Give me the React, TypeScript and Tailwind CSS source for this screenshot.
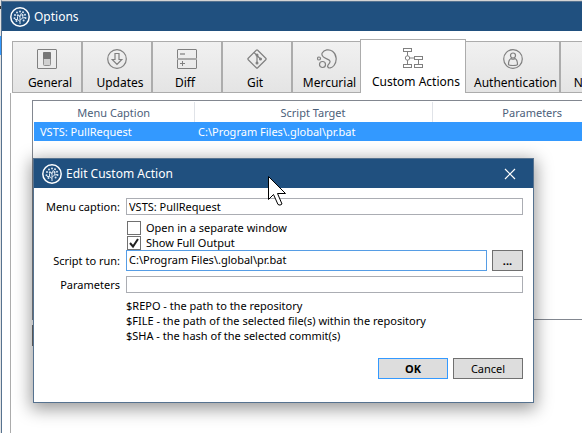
import type { ReactNode } from "react";

const stroke = { fill: "none", stroke: "#808080", strokeWidth: 1.2 };

function AppLogo() {
  return (
    <svg viewBox="0 0 20 20" className="size-5 shrink-0" fill="none" stroke="#fff" aria-hidden="true">
      <circle cx="10" cy="10" r="9.2" strokeWidth="1.5" />
      <path
        d="M10 17V8M10 14.5L7.5 12.5V9.5M7.5 12.5H5M10 13L12.8 11V8M12.8 11L15 10.5M10 10L8 7.5M10 9L11.5 6"
        stroke="#dbe6f1"
        strokeWidth="1"
      />
      <g fill="#dbe6f1" stroke="none">
        <circle cx="10" cy="4.5" r="1" />
        <circle cx="7" cy="5.5" r="1" />
        <circle cx="13" cy="5.3" r="1" />
        <circle cx="5" cy="8" r="1" />
        <circle cx="15" cy="7.8" r="1" />
        <circle cx="4.5" cy="11.3" r="1" />
        <circle cx="15.5" cy="11" r="1" />
        <circle cx="6.5" cy="14" r="1" />
        <circle cx="13.6" cy="13.5" r="1" />
        <circle cx="7.8" cy="8.6" r="1" />
        <circle cx="12.4" cy="8" r="1" />
      </g>
    </svg>
  );
}

const icons: Record<string, ReactNode> = {
  General: (
    <g>
      <rect x="0.5" y="0.5" width="19" height="19" rx="0.5" {...stroke} strokeWidth={1} />
      <rect x="6.5" y="3.5" width="7" height="13" rx="1" fill="#d0d0d0" stroke="#909090" />
      <rect x="6" y="3" width="8" height="7" rx="1" fill="#777" />
    </g>
  ),
  Updates: (
    <g {...stroke}>
      <circle cx="10" cy="10" r="9.3" />
      <path d="M8 4.5h4v6h2.800L10 15.5 5.200 10.500H8z" />
    </g>
  ),
  Diff: (
    <g {...stroke} strokeWidth={1}>
      <rect x="0.5" y="0.5" width="19" height="19" rx="0.5" />
      <path d="M0 10h20" stroke="#aaa" strokeWidth={2} />
      <path d="M3 5h5" stroke="#aaa" strokeWidth={2} />
      <path d="M3 14.5h5M5.5 12v5" />
    </g>
  ),
  Git: (
    <g {...stroke}>
      <rect x="3.3" y="3.3" width="13.4" height="13.4" rx="1" transform="rotate(45 10 10)" />
      <path d="M7 3.5L10 6.5V14M10 6.5L13.5 10" />
      <g fill="#808080">
        <circle cx="10" cy="6" r="0.9" />
        <circle cx="10" cy="14" r="0.9" />
        <circle cx="13.5" cy="10" r="0.9" />
      </g>
    </g>
  ),
  Mercurial: (
    <g {...stroke}>
      <path d="M5.2 4C7 0.500 12 -0.200 15.500 2.200C20 5.500 20.200 12.500 17 16.500C14.800 19.200 11.400 19.800 10.700 17.800C10 15.500 13.500 14.800 13 12.200C12.500 10 8.500 10 6.300 7.900C5 6.800 4.600 5.300 5.200 4Z" />
      <circle cx="5.5" cy="15.5" r="3" />
      <circle cx="2" cy="9.5" r="1.5" />
    </g>
  ),
  "Custom Actions": (
    <g {...stroke} strokeWidth={1}>
      <path d="M4.5 3.5V16.5M4.5 10H12M15.5 11.500V16.5" />
      <rect x="0.5" y="0.5" width="8" height="3" fill="#fff" />
      <rect x="11.5" y="8.5" width="8" height="3" fill="#fff" />
      <rect x="0.5" y="16.5" width="8" height="3" fill="#fff" />
      <rect x="11.5" y="16.5" width="8" height="3" fill="#fff" />
      <circle cx="4.5" cy="10" r="2.2" fill="#fff" />
    </g>
  ),
  Authentication: (
    <g {...stroke}>
      <circle cx="10" cy="10" r="9.3" />
      <circle cx="10" cy="6.5" r="2.5" />
      <path d="M8 9.500C6 10.500 5.500 13 5.500 15.500C6 16.800 14 16.800 14.500 15.500C14.500 13 14 10.500 12 9.500Q10 11 8 9.500Z" />
    </g>
  ),
  Network: (
    <g {...stroke}>
      <circle cx="10" cy="10" r="9.3" />
      <path d="M1 10h18M10 1v18" />
    </g>
  ),
};

const tabs = [
  { name: "General", width: "w-[70px]", label: "pl-1.5" },
  { name: "Updates", width: "w-[70px]", label: "pl-1.5" },
  { name: "Diff", width: "w-[70px]", label: "pr-1" },
  { name: "Git", width: "w-[70px]", label: "pr-1" },
  { name: "Mercurial", width: "w-[69px]", label: "pl-1.5" },
  { name: "Custom Actions", width: "w-[106px]", label: "pl-1.5" },
  { name: "Authentication", width: "w-[95px]", label: "pl-1.5" },
  { name: "Network", width: "w-[70px]", label: "pl-1.5" },
];

function Tab({ name, width, label }: { name: string; width: string; label: string }) {
  const selected = name === "Custom Actions";
  return (
    <button
      type="button"
      role="tab"
      aria-selected={selected}
      className={`flex shrink-0 flex-col items-center border border-[#acacac] text-[12px] whitespace-nowrap ${width} ${
        selected
          ? "z-10 -mx-px h-[54px] border-b-0 bg-white pt-2"
          : "h-[52px] bg-linear-to-b from-[#f1f1f1] to-[#e4e4e4] pt-[7px]"
      }`}
    >
      <svg viewBox="0 0 20 20" className="size-5 shrink-0" aria-hidden="true">
        {icons[name]}
      </svg>
      <span className={`mt-1 leading-5 ${label}`}>{name}</span>
    </button>
  );
}

function EditDialog() {
  return (
    <section
      role="dialog"
      aria-label="Edit Custom Action"
      className="absolute top-[158px] left-[33px] z-20 w-[501px] border border-[#56728f] bg-white shadow-[0_4px_16px_2px_rgba(0,0,0,0.4)]"
    >
      <header className="flex h-[29px] items-center gap-1 bg-[#20507f] pr-4 pl-2 text-white">
        <AppLogo />
        <h2 className="flex-1 text-[12px]">Edit Custom Action</h2>
        <button type="button" aria-label="Close" className="p-px">
          <svg viewBox="0 0 12 12" className="size-3" stroke="#fff" strokeWidth="1.2" aria-hidden="true">
            <path d="M1 1L11 11M11 1L1 11" />
          </svg>
        </button>
      </header>
      <form className="pt-[10px] pr-[10px] pb-[23px]" onSubmit={(e) => e.preventDefault()}>
        <div className="grid grid-cols-[86px_1fr] items-center gap-x-[6px]">
          <label htmlFor="caption" className="text-right">Menu caption:</label>
          <input
            id="caption"
            defaultValue="VSTS: PullRequest"
            className="h-[17px] min-w-0 border border-[#abadb3] bg-white px-[2px] outline-none"
          />
          <div className="col-start-2 flex flex-col pt-[5px] pl-px">
            <CheckRow id="separate" text="Open in a separate window" />
            <CheckRow id="output" text="Show Full Output" checked />
          </div>
          <label htmlFor="script" className="text-right">Script to run:</label>
          <div className="flex gap-[5px]">
            <input
              id="script"
              defaultValue="C:\Program Files\.global\pr.bat"
              className="h-[21px] min-w-0 flex-1 border border-[#569de5] bg-white px-[2px] pb-[3px] outline-none"
            />
            <button type="button" aria-label="Browse" className="h-[21px] w-[31px] border border-[#707070] bg-[#ddd] font-bold">
              ...
            </button>
          </div>
          <label htmlFor="params" className="pt-[5px] text-right">Parameters</label>
          <input id="params" className="mt-[5px] h-[17px] min-w-0 border border-[#abadb3] bg-white px-[2px] outline-none" />
          <div className="col-start-2 pt-[5px]">
            <p>$REPO - the path to the repository</p>
            <p>$FILE - the path of the selected file(s) within the repository</p>
            <p>$SHA - the hash of the selected commit(s)</p>
          </div>
        </div>
        <div className="mt-[15px] flex justify-end gap-[5px]">
          <button type="submit" className="h-[21px] w-[70px] border border-[#3399ff] bg-[#ddd] font-bold">OK</button>
          <button type="button" className="h-[21px] w-[70px] border border-[#707070] bg-[#ddd]">Cancel</button>
        </div>
      </form>
    </section>
  );
}

function CheckRow({ id, text, checked = false }: { id: string; text: string; checked?: boolean }) {
  return (
    <div className="flex h-[15px] items-center gap-[5px]">
      <span className="relative flex">
        <input
          id={id}
          type="checkbox"
          defaultChecked={checked}
          className="peer size-[14px] appearance-none border border-[#707070] bg-white"
        />
        <svg
          viewBox="0 0 14 14"
          className="pointer-events-none absolute inset-0 hidden size-[14px] peer-checked:block"
          fill="none"
          stroke="#212121"
          strokeWidth="2"
          aria-hidden="true"
        >
          <path d="M3 7L6 10.5L11 3" />
        </svg>
      </span>
      <label htmlFor={id}>{text}</label>
    </div>
  );
}

export default function App() {
  return (
    <div className="relative flex h-screen overflow-hidden bg-white font-['Noto_Sans','Segoe_UI',sans-serif] text-[11px] leading-[15px] text-black">
      <div className="flex w-px shrink-0 flex-col bg-[#e3e3e3]">
        <span className="mt-[6px] h-[3px] bg-[#333]" />
        <span className="mt-[27px] h-[19px] bg-[#3399ff]" />
      </div>
      <main className="flex min-w-0 flex-1 flex-col border-t border-l border-t-[#d4d4d4] border-l-[#56728f]">
        <header className="flex h-[30px] shrink-0 items-center gap-1 border-t border-[#56728f] bg-[#20507f] pl-2 text-white">
          <AppLogo />
          <h1 className="text-[12px]">Options</h1>
        </header>
        <div role="tablist" className="flex shrink-0 items-end pt-2 pl-[10px]">
          {tabs.map((t) => (
            <Tab key={t.name} {...t} />
          ))}
        </div>
        <div className="ml-2 flex-1 border-l border-[#acacac] pt-[7px] pl-[21px]">
          <div className="h-[220px] border-y border-l border-[#828790] pt-px pl-px">
            <table className="w-full table-fixed border-collapse">
              <colgroup>
                <col className="w-[160px]" />
                <col className="w-[238px]" />
                <col className="w-[200px]" />
              </colgroup>
              <thead>
                <tr className="h-5 text-[#4c607a]">
                  <th className="border-r border-[#e0e3e8] p-0 font-normal">Menu Caption</th>
                  <th className="border-r border-[#e0e3e8] p-0 font-normal">Script Target</th>
                  <th className="p-0 font-normal">Parameters</th>
                </tr>
              </thead>
              <tbody>
                <tr className="h-[19px] bg-[#3399ff] text-white">
                  <td className="px-[6px] py-0">VSTS: PullRequest</td>
                  <td className="px-1 py-0">C:\Program Files\.global\pr.bat</td>
                  <td />
                </tr>
              </tbody>
            </table>
          </div>
          <button type="button" aria-label="Add" className="mt-[5px] h-[21px] w-[70px] border border-[#707070] bg-[#ddd]" />
        </div>
      </main>
      <EditDialog />
      <svg viewBox="0 0 19 31" className="pointer-events-none absolute top-[176px] left-[268px] z-30 h-[31px] w-[19px]" aria-hidden="true">
        <path d="M0.5 0.5V23.5L5.5 18.5L10 28.500Q12 30 14 28L9.5 17.5H17.5Z" fill="#fff" stroke="#000" />
      </svg>
    </div>
  );
}
